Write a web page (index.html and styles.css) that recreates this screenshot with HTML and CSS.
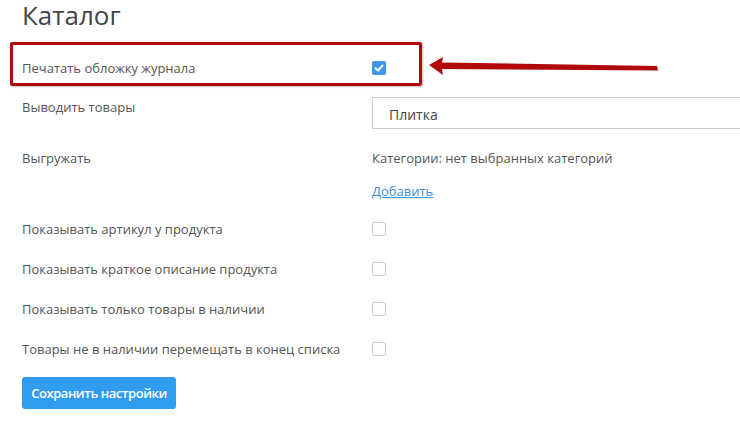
FILE: index.html
```html
<!DOCTYPE html>
<html lang="ru">
<head>
    <meta charset="UTF-8">
    <title>Каталог</title>
    <link rel="stylesheet" href="styles.css">
</head>
<body>
    <div class="page">
        <h1 class="title">Каталог</h1>

        <div class="row highlight">
            <div class="label">Печатать обложку журнала</div>
            <span class="check checked">
                <svg width="14" height="14" viewBox="0 0 14 14"><path d="M3.5 7.2 L6 9.5 L10.5 4.6" fill="none" stroke="#fff" stroke-width="2" stroke-linecap="round" stroke-linejoin="round"/></svg>
            </span>
        </div>

        <div class="row top">
            <div class="label">Выводить товары</div>
            <div class="select">Плитка</div>
        </div>

        <div class="row top export">
            <div class="label">Выгружать</div>
            <div class="value">
                <div>Категории: нет выбранных категорий</div>
                <a href="#" class="link">Добавить</a>
            </div>
        </div>

        <div class="row option">
            <div class="label">Показывать артикул у продукта</div>
            <span class="check"></span>
        </div>
        <div class="row option">
            <div class="label">Показывать краткое описание продукта</div>
            <span class="check"></span>
        </div>
        <div class="row option">
            <div class="label">Показывать только товары в наличии</div>
            <span class="check"></span>
        </div>
        <div class="row option">
            <div class="label">Товары не в наличии перемещать в конец списка</div>
            <span class="check"></span>
        </div>

        <button class="save-btn">Сохранить настройки</button>

        <!-- annotation arrow -->
        <svg class="arrow" width="240" height="24" viewBox="0 0 240 24">
            <polygon points="1,8 15,0 14,5.5 229,9 230,13.5 14,12 15,18" fill="#b20a0a"/>
        </svg>
    </div>
</body>
</html>
```

FILE: styles.css
```css
body {
    margin: 0;
    font-family: "Open Sans", Arial, sans-serif;
    color: #555;
    background: #fff;
    overflow: hidden;
}

.page {
    position: relative;
    padding-left: 22px;
    width: 718px;
    height: 425px;
}

.title {
    margin: 0;
    padding-top: 1px;
    font-size: 26px;
    font-weight: 400;
    line-height: 29px;
    color: #444;
}

.row {
    display: flex;
    align-items: center;
    font-size: 13px;
    line-height: 20px;
}

.row.top {
    align-items: flex-start;
}

.label {
    width: 350px;
    flex-shrink: 0;
}

.highlight {
    margin: 12px 0 0 -12px;
    width: 397px;
    padding: 13px 0 5px 9px;
    border: 3px solid #b20a0a;
    border-radius: 2px;
    box-shadow: 1px 1px 2px rgba(0, 0, 0, 0.25);
}

.check {
    display: inline-block;
    width: 12px;
    height: 12px;
    border: 1px solid #ccc;
    border-radius: 2px;
    background: #fff;
}

.check.checked {
    width: 14px;
    height: 14px;
    border: none;
    background: #3d95ec;
}

.check svg {
    display: block;
}

.select {
    flex: 1;
    height: 30px;
    line-height: 33px;
    padding-left: 16px;
    border: 1px solid #ccc;
    border-right: none;
    font-size: 14px;
    color: #444;
}

.highlight + .row {
    margin-top: 11px;
}

.export {
    margin-top: 19px;
}

.value div {
    height: 33px;
}

.link {
    color: #3b8fd8;
    text-decoration: underline;
}

.export + .option {
    margin-top: 8px;
}

.option {
    height: 40px;
}

.save-btn {
    margin-top: 8px;
    width: 154px;
    height: 32px;
    padding: 0;
    border: none;
    border-radius: 3px;
    background: #2f9cef;
    color: #fff;
    font-family: "Open Sans", Arial, sans-serif;
    font-size: 13px;
    font-weight: 600;
    letter-spacing: -0.45px;
    white-space: nowrap;
    cursor: pointer;
}

.arrow {
    position: absolute;
    left: 428px;
    top: 57px;
}
```
